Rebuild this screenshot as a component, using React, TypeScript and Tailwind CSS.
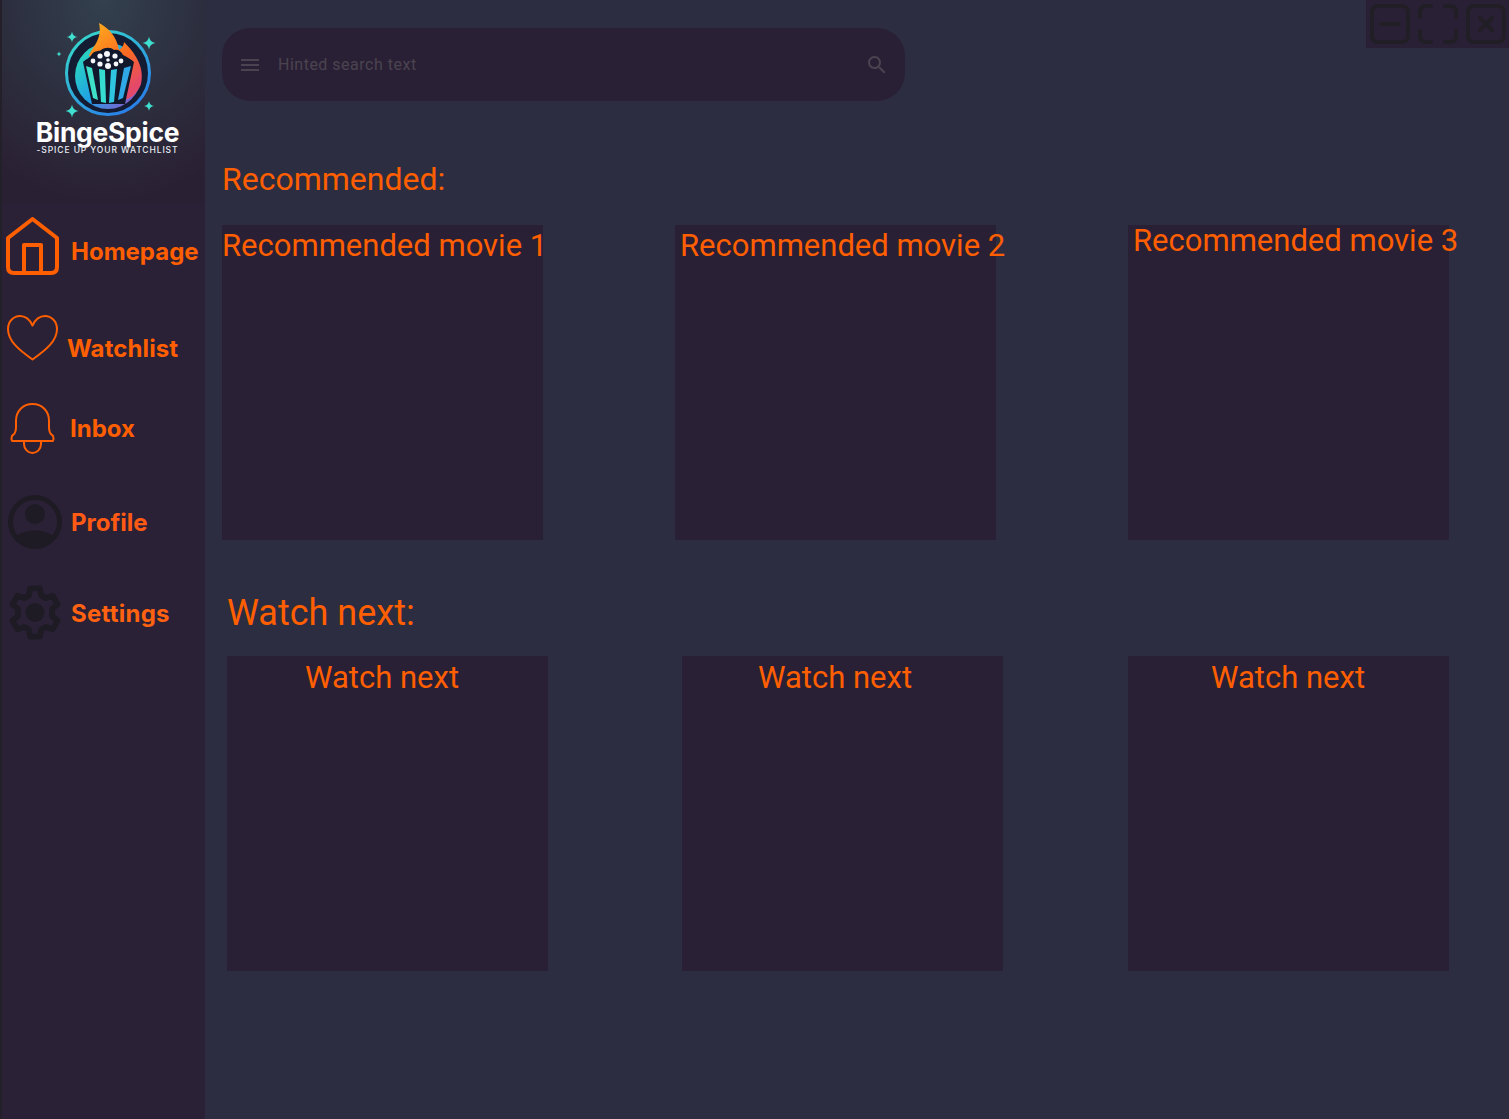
const Sparkle = ({ x, y, r }: { x: number; y: number; r: number }) => (
  <path
    d={`M${x} ${y - r}Q${x + r * 0.12} ${y - r * 0.12} ${x + r} ${y}Q${x + r * 0.12} ${y + r * 0.12} ${x} ${y + r}Q${x - r * 0.12} ${y + r * 0.12} ${x - r} ${y}Q${x - r * 0.12} ${y - r * 0.12} ${x} ${y - r}Z`}
    fill="#3fe0d0"
  />
);

function LogoMark() {
  return (
    <svg viewBox="52 20 110 98" className="w-[110px] h-[98px]">
      <defs>
        <linearGradient id="ring" x1="0" y1="0" x2="0.7" y2="1">
          <stop offset="0" stopColor="#37e0c8" />
          <stop offset="1" stopColor="#2a7fe8" />
        </linearGradient>
        <linearGradient id="fill" x1="0" y1="0" x2="1" y2="0.9">
          <stop offset="0" stopColor="#2fe6b4" />
          <stop offset="0.55" stopColor="#1f9fe6" />
          <stop offset="1" stopColor="#9a52c8" />
        </linearGradient>
        <linearGradient id="flame" x1="0" y1="0" x2="0.5" y2="1">
          <stop offset="0" stopColor="#ffb31c" />
          <stop offset="0.6" stopColor="#fb6a22" />
          <stop offset="1" stopColor="#e4486a" />
        </linearGradient>
      </defs>
      <circle cx="107" cy="73" r="41.5" fill="#131c33" stroke="url(#ring)" strokeWidth="3" />
      <circle cx="107" cy="76" r="33" fill="url(#fill)" />
      <path d="M98 23C106 27 116 36 118 50C121 48 123 45 123 42C133 52 144 66 140 84C137 92 131 98 124 100L100 62L88 56C90 48 102 40 98 23Z" fill="url(#flame)" />
      <path d="M82 62C85 59 89 58 91 54C94 50 98 52 100 50C104 47 110 47 113 50C117 49 120 51 122 55C126 57 130 59 133 62L124 104H91Z" fill="#12182c" />
      <path d="M85 66L91 68L97 100L92 98Z" fill="#3fe0c8" />
      <path d="M98 69L104 70L105 103L100 102Z" fill="#36dccf" />
      <path d="M110 70L116 69L113 102L108 103Z" fill="#2fc4e0" />
      <path d="M123 68L130 66L122 98L117 100Z" fill="#30a8e8" />
      {[[92, 61, 2.4], [99, 56, 2.6], [106, 54, 3], [114, 56, 2.6], [120, 61, 2.4], [99, 64, 2.6], [107, 66, 3], [115, 64, 2.4], [107, 60, 1.8]].map(([cx, cy, r]) => (
        <circle key={`${cx}-${cy}`} cx={cx} cy={cy} r={r} fill="#f4f6fa" />
      ))}
      <Sparkle x={71} y={37} r={5.5} />
      <Sparkle x={148} y={43} r={6.5} />
      <Sparkle x={58} y={54} r={2.5} />
      <Sparkle x={71} y={111} r={6.5} />
      <Sparkle x={148} y={106} r={5} />
    </svg>
  );
}

const HomeIcon = () => (
  <svg viewBox="0 0 53 58" className="w-[53px] h-[58px] shrink-0" fill="none" stroke="#ff5f00" strokeWidth="4" strokeLinejoin="round">
    <path d="M26.5 2L51 21V50Q51 56 45 56H8Q2 56 2 50V21Z" />
    <path d="M18 56V28H35V56" />
  </svg>
);

const HeartIcon = () => (
  <svg viewBox="0 0 51 46" className="w-[51px] h-[46px] shrink-0" fill="none" stroke="#ff5f00" strokeWidth="2" strokeLinejoin="round">
    <path d="M25.5 44.5C12 35 1 26 1 14C1 6 7 1 13 1C19 1 23 5 25.5 10.5C28 5 32 1 38 1C44 1 50 6 50 14C50 26 39 35 25.5 44.5Z" />
  </svg>
);

const BellIcon = () => (
  <svg viewBox="0 0 45 51" className="w-[45px] h-[51px] shrink-0" fill="none" stroke="#ff5f00" strokeWidth="2" strokeLinejoin="round">
    <path d="M3 38C1 38 1 33 3 32C6 30 6 27 6 24V18C6 8 13 1 22.5 1C32 1 39 8 39 18V24C39 27 39 30 42 32C44 33 44 38 42 38Z" />
    <path d="M14 38V41C14 46 18 50 22.5 50C27 50 31 46 31 41V38" />
  </svg>
);

const ProfileIcon = () => (
  <svg viewBox="0 0 54 54" className="w-[54px] h-[54px] shrink-0">
    <circle cx="27" cy="27" r="24.5" fill="none" stroke="#1e1b24" strokeWidth="5" />
    <circle cx="27" cy="19" r="10" fill="#1e1b24" />
    <path d="M7 42C13 37 20 35.5 27 35.5C34 35.5 41 37 47 42C42 49 35 53 27 53C19 53 12 49 7 42Z" fill="#1e1b24" />
  </svg>
);

const GearIcon = () => (
  <svg viewBox="0 0 24 24" className="w-[54px] h-[55px] shrink-0" fill="none" stroke="#1e1b24" strokeWidth="2.6" strokeLinejoin="round">
    <path d="M9.8 1.3H14.2L14.8 4.5L16.9 5.6L19.8 4.5L22 8.3L19.6 10.4V13.6L22 15.7L19.8 19.5L16.9 18.4L14.8 19.5L14.2 22.7H9.8L9.2 19.5L7.1 18.4L4.2 19.5L2 15.7L4.4 13.6V10.4L2 8.3L4.2 4.5L7.1 5.6L9.2 4.5Z" />
    <circle cx="12" cy="12" r="4.2" fill="#1e1b24" stroke="none" />
  </svg>
);

function NavLabel({ children, className }: { children: string; className: string }) {
  return <span className={`font-['Inter',sans-serif] font-bold text-[24px] leading-[30px] whitespace-nowrap ${className}`}>{children}</span>;
}

function Sidebar() {
  return (
    <aside className="w-[205px] shrink-0 min-h-[1119px] bg-[#2a2136] border-l-2 border-[#232029]">
      <div className="h-[203px] bg-[radial-gradient(ellipse_90%_100%_at_50%_0%,#33404e_0%,#2c2e3e_55%,#2a2033_100%)] flex flex-col items-center pt-[20px] pl-[8px]">
        <LogoMark />
        <div className="font-['Inter',sans-serif] font-bold text-[26.5px] leading-[30px] -tracking-[0.3px] text-white -mt-[1px]">BingeSpice</div>
        <div className="font-['Inter',sans-serif] font-medium text-[8.5px] leading-[10px] tracking-[0.9px] text-[#e8ecf2] whitespace-nowrap -mt-[2px]">-SPICE UP YOUR WATCHLIST</div>
      </div>
      <nav className="flex flex-col">
        <div className="flex items-center h-[58px] mt-[14px] pl-[4px] gap-[12px]">
          <HomeIcon />
          <NavLabel className="mt-[12px] text-[#ff5f00]">Homepage</NavLabel>
        </div>
        <div className="flex items-center h-[46px] mt-[40px] pl-[5px] gap-[9px]">
          <HeartIcon />
          <NavLabel className="mt-[22px] tracking-[0.1px] text-[#ff5f00]">Watchlist</NavLabel>
        </div>
        <div className="flex items-center h-[51px] mt-[42px] pl-[8px] gap-[15px]">
          <BellIcon />
          <NavLabel className="text-[#ff5f00]">Inbox</NavLabel>
        </div>
        <div className="flex items-center h-[54px] mt-[41px] pl-[6px] gap-[9px]">
          <ProfileIcon />
          <NavLabel className="mt-[2px] text-[#ff5a14]">Profile</NavLabel>
        </div>
        <div className="flex items-center h-[55px] mt-[36px] pl-[6px] gap-[9px]">
          <GearIcon />
          <NavLabel className="mt-[2px] tracking-[0.25px] text-[#ff6210]">Settings</NavLabel>
        </div>
      </nav>
    </aside>
  );
}

function Card({ title, className, titleClass }: { title: string; className?: string; titleClass?: string }) {
  return (
    <div className={`w-[321px] h-[315px] bg-[#2a2035] shrink-0 ${className ?? ""}`}>
      <div className={`text-[31px] leading-[40px] whitespace-nowrap ${titleClass ?? ""}`}>{title}</div>
    </div>
  );
}

function WindowControls() {
  return (
    <div className="absolute top-0 right-0 w-[143px] h-[48px] bg-[#2a2035] flex items-center pl-[4px] gap-[8px]">
      <svg viewBox="0 0 40 40" className="w-[40px] h-[40px]" fill="none" stroke="#211e26" strokeWidth="4" strokeLinecap="round">
        <rect x="2" y="2" width="36" height="36" rx="6" />
        <path d="M11 20H29" />
      </svg>
      <svg viewBox="0 0 40 40" className="w-[40px] h-[40px]" fill="none" stroke="#211e26" strokeWidth="4" strokeLinecap="round">
        <path d="M2 13V8Q2 2 8 2H13M27 2H32Q38 2 38 8V13M38 27V32Q38 38 32 38H27M13 38H8Q2 38 2 32V27" />
      </svg>
      <svg viewBox="0 0 40 40" className="w-[40px] h-[40px]" fill="none" stroke="#211e26" strokeWidth="4" strokeLinecap="round">
        <rect x="2" y="2" width="36" height="36" rx="6" />
        <path d="M14 14L26 26M26 14L14 26" />
      </svg>
    </div>
  );
}

export default function App() {
  return (
    <div className="relative flex w-[1509px] h-[1119px] overflow-hidden bg-[#2c2d40] font-['Roboto',sans-serif] text-[#ff5f00]">
      <Sidebar />
      <main className="flex-1 pl-[17px]">
        <div className="mt-[28px] w-[683px] h-[73px] rounded-[28px] bg-[#2a2035] flex items-center px-[16px]">
          <svg viewBox="0 0 24 24" className="w-[24px] h-[24px] fill-[#4a4450]">
            <path d="M3 18h18v-2H3v2zm0-5h18v-2H3v2zm0-7v2h18V6H3z" />
          </svg>
          <span className="ml-[16px] text-[16px] leading-[24px] tracking-[0.5px] text-[#4a4450]">Hinted search text</span>
          <svg viewBox="0 0 24 24" className="ml-auto w-[24px] h-[24px] fill-[#4a4450]">
            <path d="M15.5 14h-.79l-.28-.27C15.41 12.59 16 11.11 16 9.5 16 5.91 13.09 3 9.5 3S3 5.91 3 9.5 5.91 16 9.5 16c1.61 0 3.09-.59 4.23-1.57l.27.28v.79l5 4.99L20.49 19l-4.99-5zm-6 0C7.01 14 5 11.99 5 9.5S7.01 5 9.5 5 14 7.01 14 9.5 11.99 14 9.5 14z" />
          </svg>
        </div>

        <h2 className="mt-[58px] text-[32px] leading-[40px] font-normal">Recommended:</h2>
        <div className="flex mt-[26px] gap-[132px]">
          <Card title="Recommended movie 1" titleClass="pt-[1px]" />
          <Card title="Recommended movie 2" titleClass="ml-[5px] pt-[1px]" />
          <Card title="Recommended movie 3" titleClass="ml-[5px] -mt-[4px]" />
        </div>

        <h2 className="mt-[50px] ml-[5px] text-[36px] leading-[46px] font-normal">Watch next:</h2>
        <div className="flex mt-[20px] ml-[5px]">
          <Card title="Watch next" titleClass="pl-[78px] pt-[2px]" />
          <Card title="Watch next" className="ml-[134px]" titleClass="pl-[76px] pt-[2px]" />
          <Card title="Watch next" className="ml-[125px]" titleClass="pl-[83px] pt-[2px]" />
        </div>
      </main>
      <WindowControls />
    </div>
  );
}
